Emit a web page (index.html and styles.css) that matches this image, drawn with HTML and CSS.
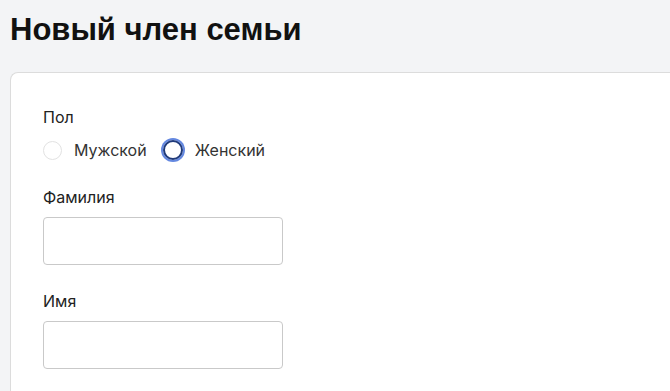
FILE: index.html
```html
<!DOCTYPE html>
<html lang="ru">
<head>
    <meta charset="UTF-8">
    <meta name="viewport" content="width=device-width, initial-scale=1.0">
    <title>Новый член семьи</title>
    <link rel="stylesheet" href="styles.css">
</head>
<body>
    <div class="page">
        <h1>Новый член семьи</h1>
        <div class="card">
            <div class="field">
                <div class="label">Пол</div>
                <div class="radios">
                    <label class="radio">
                        <span class="dot"></span>
                        <span>Мужской</span>
                    </label>
                    <label class="radio">
                        <span class="dot active"></span>
                        <span>Женский</span>
                    </label>
                </div>
            </div>
            <div class="field">
                <div class="label">Фамилия</div>
                <div class="input"></div>
            </div>
            <div class="field">
                <div class="label">Имя</div>
                <div class="input"></div>
            </div>
        </div>
    </div>
</body>
</html>
```

FILE: styles.css
```css
body {
    margin: 0;
    font-family: "Inter", "Noto Sans", sans-serif;
    background-color: #f3f4f6;
    color: #1a1a1a;
    overflow: hidden;
}
.page {
    padding: 0 0 0 10px;
    height: 100vh;
    display: flex;
    flex-direction: column;
}
h1 {
    margin: 0;
    padding-top: 10px;
    font-family: "Liberation Sans", Arial, sans-serif;
    font-size: 31px;
    line-height: 40px;
    font-weight: bold;
    color: #111;
    height: 62px;
    flex-shrink: 0;
}
.card {
    flex: 1;
    background: #fff;
    border: 1px solid #dcdcdc;
    border-right: none;
    border-bottom: none;
    border-radius: 8px 0 0 0;
    padding: 34px 32px 0;
}
.field {
    margin-bottom: 26px;
}
.field:first-child {
    margin-bottom: 25px;
}
.label {
    font-size: 16px;
    line-height: 20px;
    color: #222;
    margin-bottom: 10px;
}
.radios {
    display: flex;
    align-items: center;
    height: 24px;
    gap: 16px;
    margin-top: 11px;
}
.field:first-child .label {
    margin-bottom: 0;
}
.radio {
    display: flex;
    align-items: center;
    gap: 12px;
    font-size: 16px;
    color: #333;
}
.dot {
    width: 19px;
    height: 19px;
    border-radius: 50%;
    border: 1px solid #e2e2e2;
    box-sizing: border-box;
}
.dot.active {
    width: 20px;
    height: 20px;
    border: 2px solid #1f3a7a;
    box-shadow: 0 0 0 2px #6488e0;
}
.input {
    width: 240px;
    height: 48px;
    box-sizing: border-box;
    border: 1px solid #c9c9c9;
    border-radius: 4px;
    background: #fff;
}
```
